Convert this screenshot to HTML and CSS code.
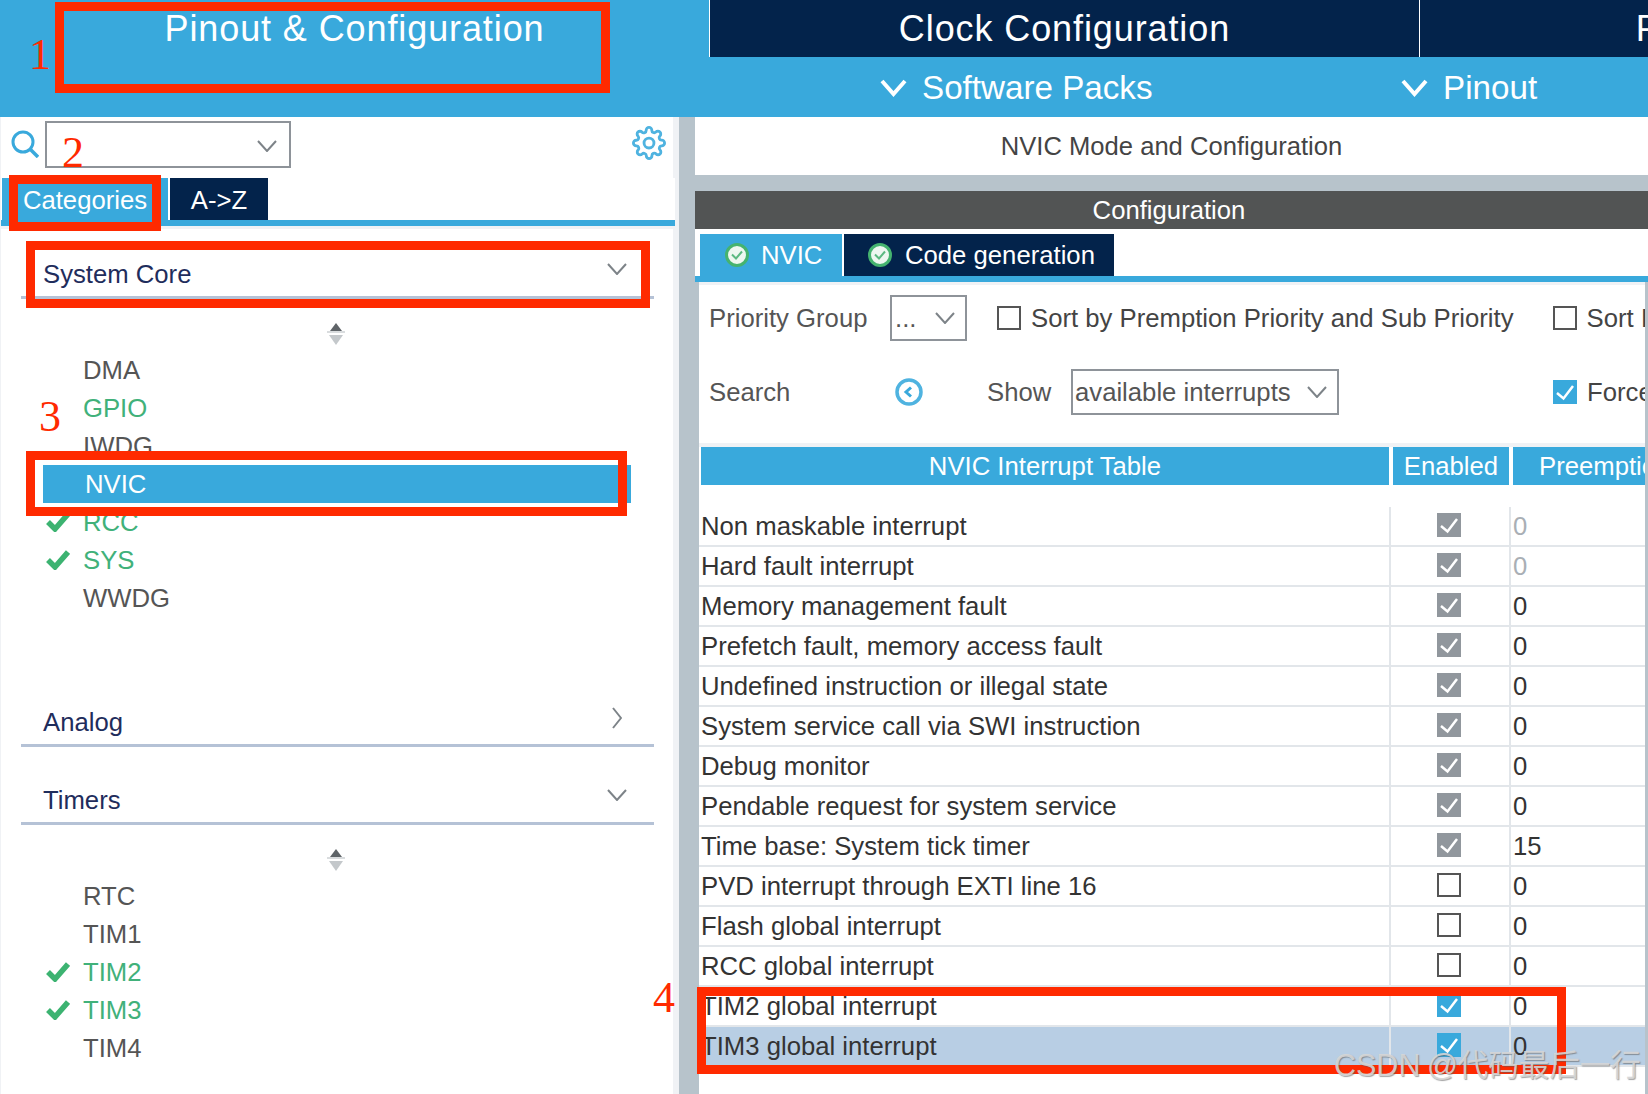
FILE: index.html
```html
<!DOCTYPE html>
<html lang="en">
<head>
<meta charset="utf-8">
<title>NVIC Mode and Configuration</title>
<link rel="stylesheet" href="styles.css">
</head>
<body>
<svg class="sprite" aria-hidden="true">
  <symbol id="i-down" viewBox="0 0 20 12"><path d="M1 1l9 10 9-10" fill="none" stroke="currentColor" stroke-width="2"/></symbol>
  <symbol id="i-right" viewBox="0 0 10 22"><path d="M1 1l8 10-8 10" fill="none" stroke="currentColor" stroke-width="2"/></symbol>
  <symbol id="i-vee" viewBox="0 0 27 18"><path d="M2 2l11.500 13L25 2" fill="none" stroke="currentColor" stroke-width="4"/></symbol>
  <symbol id="i-tick" viewBox="0 0 24 20"><path d="M2 10l7 7L22 2" fill="none" stroke="currentColor" stroke-width="5.500"/></symbol>
  <symbol id="i-scroll" viewBox="0 0 18 22"><path d="M9 0l6 8H3z" fill="#5f6468"/><path d="M0 8h18v2H0z" fill="#d9dcde"/><path d="M2 12h14l-7 10z" fill="#c4c8cb"/></symbol>
  <symbol id="i-ok" viewBox="0 0 24 24"><circle cx="12" cy="12" r="10.500" fill="#eef7f0" stroke="#45b36f" stroke-width="3"/><path d="M7 11.500l4 4 6-7" fill="none" stroke="#5cb981" stroke-width="2"/></symbol>
  <symbol id="i-box" viewBox="0 0 24 24"><path d="M4 13l6.500 5.500L20 6" fill="none" stroke="#fff" stroke-width="2.500"/></symbol>
</svg>

<header class="top">
  <nav class="main-tabs">
    <div class="main-tab is-active">Pinout &amp; Configuration</div>
    <div class="main-tab">Clock Configuration</div>
    <div class="main-tab">Project Manager</div>
  </nav>
  <div class="menu">
    <div class="menu-item menu-packs"><svg class="vee"><use href="#i-vee"/></svg>Software Packs</div>
    <div class="menu-item"><svg class="vee"><use href="#i-vee"/></svg>Pinout</div>
  </div>
</header>

<main class="work">
  <aside class="side">
    <div class="tools">
      <svg class="search-icon" viewBox="0 0 28 28"><circle cx="12" cy="12" r="10" fill="none" stroke="#39a9dc" stroke-width="3"/><path d="M19 19l8 8" stroke="#39a9dc" stroke-width="3.500"/></svg>
      <div class="combo"><svg class="chev"><use href="#i-down"/></svg></div>
      <svg class="gear" viewBox="0 0 24 24" fill="none" stroke="#4fb3e0" stroke-width="2"><circle cx="12" cy="12" r="3.500"/><path d="M19.400 15a1.650 1.650 0 0 0 .33 1.820l.06.06a2 2 0 0 1 0 2.830 2 2 0 0 1-2.830 0l-.06-.06a1.650 1.650 0 0 0-1.820-.33 1.650 1.650 0 0 0-1 1.510V21a2 2 0 0 1-2 2 2 2 0 0 1-2-2v-.09A1.650 1.650 0 0 0 9 19.400a1.650 1.650 0 0 0-1.820.33l-.06.06a2 2 0 0 1-2.830 0 2 2 0 0 1 0-2.830l.06-.06a1.650 1.650 0 0 0 .33-1.820 1.650 1.650 0 0 0-1.510-1H3a2 2 0 0 1-2-2 2 2 0 0 1 2-2h.09A1.650 1.650 0 0 0 4.600 9a1.650 1.650 0 0 0-.33-1.820l-.06-.06a2 2 0 0 1 0-2.830 2 2 0 0 1 2.830 0l.06.06a1.650 1.650 0 0 0 1.820.33H9a1.650 1.650 0 0 0 1-1.510V3a2 2 0 0 1 2-2 2 2 0 0 1 2 2v.09a1.650 1.650 0 0 0 1 1.510 1.650 1.650 0 0 0 1.820-.33l.06-.06a2 2 0 0 1 2.830 0 2 2 0 0 1 0 2.830l-.06.06a1.650 1.650 0 0 0-.33 1.820V9a1.650 1.650 0 0 0 1.510 1H21a2 2 0 0 1 2 2 2 2 0 0 1-2 2h-.09a1.650 1.650 0 0 0-1.510 1z"/></svg>
    </div>
    <div class="side-tabs">
      <div class="side-tab is-active">Categories</div>
      <div class="side-tab">A-&gt;Z</div>
    </div>
    <div class="side-body">
      <div class="group-head head-core">System Core<svg class="chev"><use href="#i-down"/></svg></div>
      <svg class="scroller"><use href="#i-scroll"/></svg>
      <ul class="items">
        <li class="item"><span class="tick"></span>DMA</li>
        <li class="item is-ok"><span class="tick"></span>GPIO</li>
        <li class="item"><span class="tick"></span>IWDG</li>
        <li class="item is-selected"><span class="tick"></span>NVIC</li>
        <li class="item is-ok"><svg class="tick"><use href="#i-tick"/></svg>RCC</li>
        <li class="item is-ok"><svg class="tick"><use href="#i-tick"/></svg>SYS</li>
        <li class="item"><span class="tick"></span>WWDG</li>
      </ul>
      <div class="group-head head-analog">Analog<svg class="chev-r"><use href="#i-right"/></svg></div>
      <div class="group-head head-timers">Timers<svg class="chev"><use href="#i-down"/></svg></div>
      <svg class="scroller"><use href="#i-scroll"/></svg>
      <ul class="items">
        <li class="item"><span class="tick"></span>RTC</li>
        <li class="item"><span class="tick"></span>TIM1</li>
        <li class="item is-ok"><svg class="tick"><use href="#i-tick"/></svg>TIM2</li>
        <li class="item is-ok"><svg class="tick"><use href="#i-tick"/></svg>TIM3</li>
        <li class="item"><span class="tick"></span>TIM4</li>
      </ul>
    </div>
  </aside>

  <section class="pane">
    <h1 class="pane-title">NVIC Mode and Configuration</h1>
    <div class="pane-body">
      <h2 class="config-bar">Configuration</h2>
      <div class="sub-tabs">
        <div class="sub-tab tab-nvic is-active"><svg class="ok"><use href="#i-ok"/></svg>NVIC</div>
        <div class="sub-tab tab-code"><svg class="ok"><use href="#i-ok"/></svg>Code generation</div>
      </div>
      <div class="sheet">
        <div class="opts opts-first">
          <span class="lbl lbl-group">Priority Group</span>
          <div class="combo combo-small">...<svg class="chev"><use href="#i-down"/></svg></div>
          <span class="box is-off opt-box"></span>
          <span class="opt-text opt-sort">Sort by Premption Priority and Sub Priority</span>
          <span class="box is-off opt-box"></span>
          <span class="opt-text">Sort Interrupts</span>
        </div>
        <div class="opts opts-second">
          <span class="lbl lbl-search">Search</span>
          <svg class="back" viewBox="0 0 28 28"><circle cx="14" cy="14" r="12" fill="none" stroke="#4fb3e0" stroke-width="3.500"/><path d="M16 9.500l-5 4.500 5 4.500" fill="none" stroke="#39a9dc" stroke-width="3"/></svg>
          <span class="lbl lbl-show">Show</span>
          <div class="combo combo-show">available interrupts<svg class="chev"><use href="#i-down"/></svg></div>
          <span class="box is-on opt-box"><svg><use href="#i-box"/></svg></span>
          <span class="opt-text">Force DMA channels Interrupts</span>
        </div>
        <div class="t-head">
          <div class="th">NVIC Interrupt Table</div>
          <div class="th">Enabled</div>
          <div class="th th-pre">Preemption Priority</div>
        </div>
        <div class="t-body">
          <div class="row"><div class="c-name">Non maskable interrupt</div><div class="c-en"><span class="box is-fixed"><svg><use href="#i-box"/></svg></span></div><div class="c-val is-dim">0</div></div>
          <div class="row"><div class="c-name">Hard fault interrupt</div><div class="c-en"><span class="box is-fixed"><svg><use href="#i-box"/></svg></span></div><div class="c-val is-dim">0</div></div>
          <div class="row"><div class="c-name">Memory management fault</div><div class="c-en"><span class="box is-fixed"><svg><use href="#i-box"/></svg></span></div><div class="c-val">0</div></div>
          <div class="row"><div class="c-name">Prefetch fault, memory access fault</div><div class="c-en"><span class="box is-fixed"><svg><use href="#i-box"/></svg></span></div><div class="c-val">0</div></div>
          <div class="row"><div class="c-name">Undefined instruction or illegal state</div><div class="c-en"><span class="box is-fixed"><svg><use href="#i-box"/></svg></span></div><div class="c-val">0</div></div>
          <div class="row"><div class="c-name">System service call via SWI instruction</div><div class="c-en"><span class="box is-fixed"><svg><use href="#i-box"/></svg></span></div><div class="c-val">0</div></div>
          <div class="row"><div class="c-name">Debug monitor</div><div class="c-en"><span class="box is-fixed"><svg><use href="#i-box"/></svg></span></div><div class="c-val">0</div></div>
          <div class="row"><div class="c-name">Pendable request for system service</div><div class="c-en"><span class="box is-fixed"><svg><use href="#i-box"/></svg></span></div><div class="c-val">0</div></div>
          <div class="row"><div class="c-name">Time base: System tick timer</div><div class="c-en"><span class="box is-fixed"><svg><use href="#i-box"/></svg></span></div><div class="c-val">15</div></div>
          <div class="row"><div class="c-name">PVD interrupt through EXTI line 16</div><div class="c-en"><span class="box is-off"></span></div><div class="c-val">0</div></div>
          <div class="row"><div class="c-name">Flash global interrupt</div><div class="c-en"><span class="box is-off"></span></div><div class="c-val">0</div></div>
          <div class="row"><div class="c-name">RCC global interrupt</div><div class="c-en"><span class="box is-off"></span></div><div class="c-val">0</div></div>
          <div class="row"><div class="c-name">TIM2 global interrupt</div><div class="c-en"><span class="box is-on"><svg><use href="#i-box"/></svg></span></div><div class="c-val">0</div></div>
          <div class="row is-picked"><div class="c-name">TIM3 global interrupt</div><div class="c-en"><span class="box is-on"><svg><use href="#i-box"/></svg></span></div><div class="c-val">0</div></div>
        </div>
      </div>
    </div>
  </section>
</main>

<div class="frame frame-1"></div>
<div class="frame frame-2"></div>
<div class="frame frame-3"></div>
<div class="frame frame-4"></div>
<div class="frame frame-5"></div>
<span class="num num-1">1</span>
<span class="num num-2">2</span>
<span class="num num-3">3</span>
<span class="num num-4">4</span>
<span class="mark">CSDN @代码最后一行</span>
</body>
</html>
```

FILE: styles.css
```css
* { box-sizing: border-box; }
html, body { margin: 0; padding: 0; }
body {
  position: relative;
  width: 1648px;
  height: 1094px;
  overflow: hidden;
  background: #fff;
  color: #333;
  font-family: "Liberation Sans", Arial, sans-serif;
  font-size: 25.7px;
}
.sprite { position: absolute; width: 0; height: 0; }
ul { list-style: none; margin: 0; padding: 0; }
h1, h2 { margin: 0; font-weight: 400; }

/* header */
.top { height: 117px; background: #39a9dc; color: #fff; overflow: hidden; }
.main-tabs { display: flex; height: 57px; }
.main-tab {
  flex: 0 0 710px;
  height: 57px;
  display: flex;
  align-items: center;
  justify-content: center;
  font-size: 36px;
  letter-spacing: 0.9px;
  background: #03234b;
  border-right: 1px solid #fff;
  white-space: nowrap;
}
.main-tab.is-active { background: #39a9dc; }
.menu { display: flex; height: 60px; padding: 1px 0 0 880px; font-size: 33.2px; }
.menu-item { display: flex; align-items: center; white-space: nowrap; }
.menu-packs { width: 521px; }
.vee { width: 27px; height: 18px; margin-right: 15px; }

/* left column */
.work { display: flex; height: 977px; }
.side {
  flex: 0 0 695px;
  background: #fff;
  border-left: 1px solid #f0f2f5;
  border-right: 16px solid #b7c3cb;
  box-shadow: inset -6px 0 0 #f0f2f5;
}
.tools { display: flex; align-items: flex-start; height: 61px; padding: 4px 0 0 10px; }
.search-icon { width: 28px; height: 28px; margin: 9px 6px 0 0; }
.combo {
  position: relative;
  flex: none;
  display: flex;
  align-items: center;
  border: 2px solid #8e9399;
  background: #fff;
  color: #555;
}
.tools .combo { width: 246px; height: 47px; }
.chev { width: 20px; height: 12px; color: #7d8388; }
.tools .chev { position: absolute; right: 12px; top: 17px; }
.gear { width: 34px; height: 34px; margin: 5px 0 0 341px; }

.side-tabs {
  display: flex;
  gap: 2px;
  width: 674px;
  height: 48px;
  padding-left: 1px;
  border-bottom: 6px solid #39a9dc;
  background: #fff;
}
.side-tab {
  display: flex;
  align-items: center;
  justify-content: center;
  width: 98px;
  height: 42px;
  padding-top: 2px;
  background: #03234b;
  color: #fff;
}
.side-tab.is-active { width: 166px; background: #39a9dc; }
.side-body { width: 672px; border-top: 3px solid #f0f2f5; }

.group-head {
  position: relative;
  display: flex;
  align-items: center;
  height: 47px;
  margin: 0 19px 0 20px;
  padding: 1px 0 0 22px;
  border-bottom: 3px solid #b5c2d6;
  color: #1f2d5c;
}
.head-core { margin-top: 23px; }
.head-analog { margin-top: 83px; }
.head-timers { margin-top: 31px; }
.group-head .chev { position: absolute; right: 27px; top: 11px; }
.chev-r { position: absolute; right: 32px; top: 7px; width: 10px; height: 22px; color: #7d8388; }
.scroller { display: block; width: 18px; height: 22px; margin: 24px 0 6px 326px; }

.items { margin-left: 42px; width: 588px; }
.item { display: flex; align-items: center; height: 38px; padding-left: 3px; color: #555; }
.tick { flex: none; width: 24px; height: 20px; margin-right: 13px; color: #3cb371; }
.item.is-ok { color: #41b17a; }
.item.is-selected { background: #39a9dc; color: #fff; padding-left: 5px; }

/* right column */
.pane { flex: 1; min-width: 0; background: #fff; }
.pane-title { height: 58px; display: flex; align-items: center; justify-content: center; font-size: 25.6px; color: #444; }
.pane-body { background: #b7c3cb; padding-top: 16px; height: 919px; }
.config-bar {
  height: 38px;
  display: flex;
  align-items: center;
  justify-content: center;
  padding-right: 5px;
  background: #525454;
  color: #fff;
  font-size: 25.7px;
}
.sub-tabs {
  display: flex;
  gap: 2px;
  height: 53px;
  padding: 5px 0 0 5px;
  background: #fff;
  border-bottom: 6px solid #39a9dc;
  color: #fff;
}
.sub-tab { display: flex; align-items: center; height: 42px; padding-top: 1px; background: #03234b; }
.tab-nvic { width: 142px; padding-left: 25px; background: #39a9dc; }
.tab-code { width: 270px; padding-left: 24px; }
.ok { width: 24px; height: 24px; margin: -1px 12px 0 0; }
.tab-code .ok { margin-right: 13px; }

.sheet { height: 812px; margin: 0 3px 0 4px; padding-top: 3px; background: #f0f2f5; overflow: hidden; }
.opts {
  display: flex;
  align-items: center;
  height: 46px;
  padding-left: 10px;
  background: #fff;
  white-space: nowrap;
  color: #444;
  box-shadow: 0 -10px 0 #fff, 0 28px 0 #fff;
}
.opts-first { margin-top: 10px; }
.opts-second { margin-top: 28px; }
.lbl { color: #555; flex: none; }
.lbl-group { width: 181px; }
.lbl-search { width: 186px; }
.lbl-show { width: 84px; }
.combo-small { width: 77px; height: 46px; padding: 0 0 0 3px; margin-right: 30px; }
.combo-small .chev { position: absolute; right: 10px; top: 15px; }
.combo-show { width: 268px; height: 46px; padding-left: 2px; margin-right: 214px; }
.combo-show .chev { position: absolute; right: 10px; top: 15px; }
.back { width: 28px; height: 28px; margin-right: 64px; flex: none; }

.box { flex: none; display: block; width: 24px; height: 24px; }
.box svg { display: block; width: 24px; height: 24px; }
.box.is-off { border: 2px solid #555; background: #fff; }
.box.is-on { background: #39a9dc; }
.box.is-fixed { background: #91979d; }
.opt-box { margin-right: 10px; }
.opt-sort { margin-right: 39px; }

.t-head {
  display: grid;
  grid-template-columns: 688px 116px 1fr;
  gap: 4px;
  height: 60px;
  margin-top: 32px;
  padding: 0 0 22px 2px;
  background: #fff;
  position: relative;
  color: #fff;
}
.th {
  height: 38px;
  display: flex;
  align-items: center;
  justify-content: center;
  background: #39a9dc;
  white-space: nowrap;
  overflow: hidden;
}
.th-pre { justify-content: flex-start; padding-left: 26px; }

.t-body { background: #fff; height: 600px; }
.row {
  display: grid;
  grid-template-columns: 690px 120px 1fr;
  height: 40px;
  border-bottom: 2px solid #e2e6ea;
  background: #fff;
}
.c-name { display: flex; align-items: center; padding-left: 2px; white-space: nowrap; }
.c-en { display: flex; align-items: center; justify-content: center; padding: 0 2px 2px 0; border-left: 2px solid #e2e6ea; }
.c-val { display: flex; align-items: center; padding-left: 2px; border-left: 2px solid #e2e6ea; }
.c-val.is-dim { color: #a9afb5; }
.row.is-picked { background: #b8cee4; }

/* annotations over the screenshot */
.frame { position: absolute; border: 9px solid #ff2a00; pointer-events: none; }
.frame-1 { left: 55px; top: 2px; width: 555px; height: 91px; }
.frame-2 { left: 9px; top: 175px; width: 152px; height: 56px; }
.frame-3 { left: 26px; top: 241px; width: 624px; height: 67px; }
.frame-4 { left: 26px; top: 451px; width: 601px; height: 65px; }
.frame-5 { left: 697px; top: 987px; width: 869px; height: 87px; }
.num {
  position: absolute;
  color: #ff2a00;
  font-family: "Liberation Serif", "Times New Roman", serif;
  font-size: 44px;
  line-height: 44px;
}
.num-1 { left: 29px; top: 33px; }
.num-2 { left: 62px; top: 131px; }
.num-3 { left: 39px; top: 395px; }
.num-4 { left: 653px; top: 976px; }
.mark {
  position: absolute;
  left: 1334px;
  top: 1045px;
  font-family: "Liberation Sans", "Noto Sans CJK SC", sans-serif;
  font-size: 30.5px;
  line-height: 40px;
  word-spacing: -2px;
  white-space: nowrap;
  color: rgba(215, 215, 215, 0.9);
  text-shadow: 1px 1px 1px rgba(90, 90, 90, 0.55);
}
```
